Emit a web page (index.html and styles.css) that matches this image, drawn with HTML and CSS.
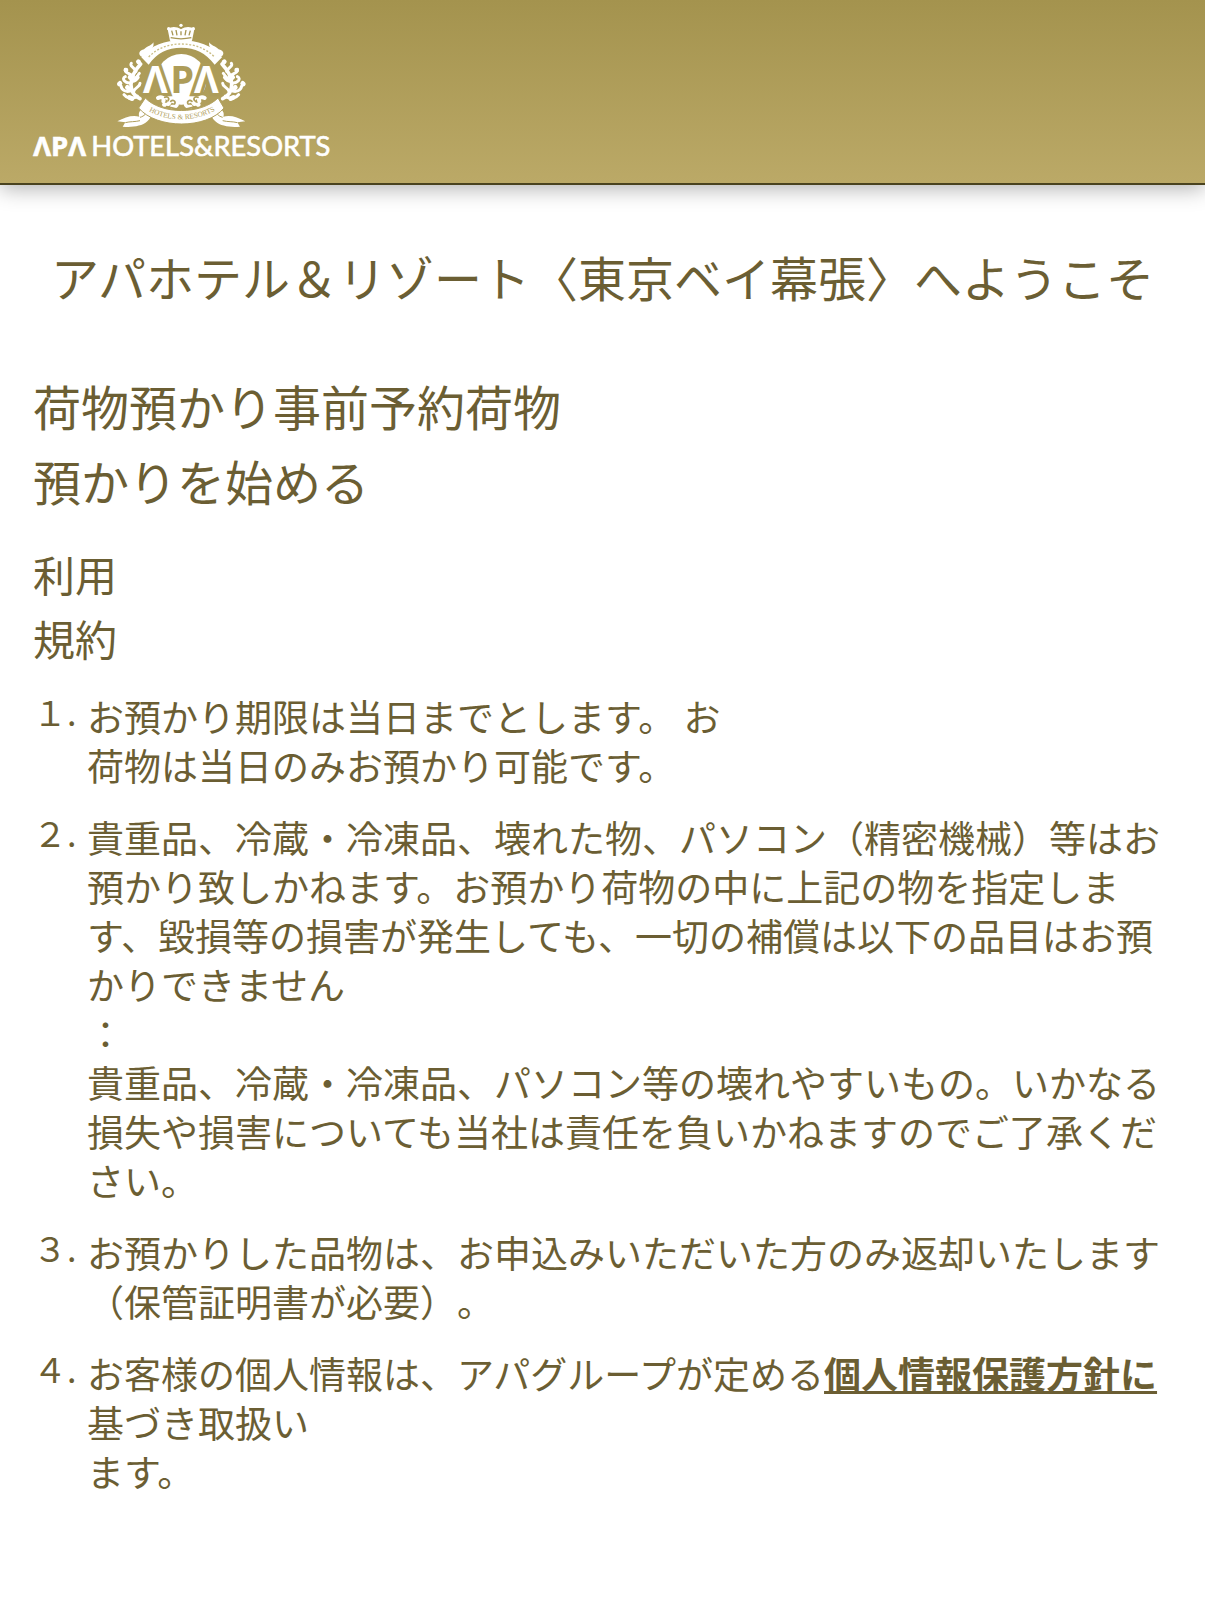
FILE: index.html
```
<!DOCTYPE html>
<html lang="ja">
<head>
    <meta charset="UTF-8">
    <meta name="viewport" content="width=device-width, initial-scale=1.0">
    <title>荷物預かり事前予約</title>
    <link rel="stylesheet" href="styles.css">
</head>
<body>
    <header class="header">
        <svg class="logo" viewBox="0 0 990 480" role="img" aria-label="APA HOTELS &amp; RESORTS">
            <defs>
                <!-- 左側の葉飾り（右側は反転して使う） -->
                <g id="leaves" fill="none" stroke="#fff" stroke-linecap="round">
                    <path d="M360 266C325 250 322 205 362 162" stroke-width="11"/>
                    <path d="M338 240C318 250 305 240 303 228M334 218C315 222 303 205 316 200M340 200C328 188 312 190 316 178M348 184C340 168 328 170 334 160M340 246C345 230 360 232 360 220M340 214C352 212 350 196 358 190M352 258C335 272 318 262 312 254" stroke-width="9"/>
                    <path d="M300 220l-2 2M318 180l0 1M355 155l1 1M328 262l8 4M346 208l6-6M322 232l3 3M330 202l3 2" stroke-width="14"/>
                </g>
                <g id="tails">
                    <path d="M372 118C352 122 354 142 374 142L386 130C392 118 404 112 400 97C394 108 384 106 372 118Z" fill="#fff"/>
                    <path d="M384 296C366 290 352 306 358 320C340 314 315 320 292 334L316 337L308 350C335 352 365 350 382 334C396 322 396 304 384 296Z" fill="#fff"/>
                    <path d="M360 322C374 318 380 310 378 302M316 338C330 334 345 336 360 332" fill="none" stroke="#b1a05d" stroke-width="3"/>
                    <path d="M414 264C424 258 434 264 430 274M432 284C444 286 452 280 448 268M456 290C466 292 472 286 470 280" fill="none" stroke="#fff" stroke-width="12" stroke-linecap="round"/>
                    <path d="M434 262C442 258 450 264 444 272M452 274C460 268 468 274 464 282M440 290L474 298" fill="none" stroke="#af9e5b" stroke-width="5" stroke-linecap="round"/>
                </g>
                <path id="ribbon-line" d="M378 298C436 338 532 338 594 296"/>
            </defs>

            <!-- 王冠 -->
            <g fill="#fff">
                <path d="M450 92L443 58C455 48 470 50 483 58C496 50 511 48 523 58L516 92C500 98 466 98 450 92Z"/>
                <circle cx="483" cy="46" r="5"/>
                <circle cx="446" cy="56" r="5"/>
                <circle cx="520" cy="56" r="5"/>
            </g>
            <path d="M455 62l4 14M468 60l3 16M483 64v12M498 60l-3 16M511 62l-4 14M452 83C470 87 496 87 514 83" fill="none" stroke="#a79653" stroke-width="4"/>

            <circle cx="484" cy="208" r="76" fill="#fff"/>
            <g class="emblem-text">
                <text class="emblem-a" x="369" y="250">Λ</text>
                <text class="emblem-a" x="522" y="250">Λ</text>
                <text class="emblem-p" x="451" y="250">P</text>
            </g>

            <use href="#leaves"/>
            <use href="#leaves" transform="translate(968 0) scale(-1 1)"/>
            <use href="#tails"/>
            <use href="#tails" transform="translate(968 0) scale(-1 1)"/>

            <!-- リボン -->
            <path d="M364 142C392 106 436 91 484 91C532 91 576 106 606 142L584 164C556 128 526 113 484 113C442 113 412 128 386 164Z" fill="#fff"/>
            <path d="M386 141C412 114 446 102 484 102C522 102 556 114 584 141" fill="none" stroke="#cabd85" stroke-width="4" stroke-dasharray="6 5"/>
            <path d="M376 264C424 314 544 314 594 264L612 294C560 358 410 358 356 294Z" fill="#fff" stroke="#b1a05d" stroke-width="3"/>
            <text class="ribbon-text"><textPath href="#ribbon-line" startOffset="50%">HOTELS &amp; RESORTS</textPath></text>

            <text class="wordmark-apa" x="40" y="439">ΛPΛ</text>
            <text class="wordmark" x="214" y="439">HOTELS&amp;RESORTS</text>
        </svg>
    </header>

    <main class="content">
        <h1 class="welcome">アパホテル＆リゾート〈東京ベイ幕張〉へようこそ</h1>
        <h2 class="page-title">荷物預かり事前予約荷物<br>預かりを始める</h2>
        <h3 class="terms-title">利用<br>規約</h3>
        <ol class="terms">
            <li>
                <span class="number">１.</span>
                <p>お預かり期限は当日までとします。 お<br>荷物は当日のみお預かり可能です。</p>
            </li>
            <li>
                <span class="number">２.</span>
                <p>貴重品、冷蔵・冷凍品、壊れた物、パソコン（精密機械）等はお預かり致しかねます。お預かり荷物の中に上記の物を指定します、毀損等の損害が発生しても、一切の補償は以下の品目はお預かりできません<br>：<br>貴重品、冷蔵・冷凍品、パソコン等の壊れやすいもの。いかなる損失や損害についても当社は責任を負いかねますのでご了承ください。</p>
            </li>
            <li>
                <span class="number">３.</span>
                <p>お預かりした品物は、お申込みいただいた方のみ返却いたします（保管証明書が必要）。</p>
            </li>
            <li>
                <span class="number">４.</span>
                <p>お客様の個人情報は、アパグループが定める<a href="#">個人情報保護方針に</a>基づき取扱い<br>ます。</p>
            </li>
        </ol>
    </main>
</body>
</html>
```
FILE: styles.css
```
* {
    box-sizing: border-box;
}

body {
    margin: 0;
    background: #fff;
    color: #6b5e33;
    font-family: "Noto Sans CJK JP", sans-serif;
    text-spacing-trim: space-all;
}

.header {
    padding: 10px 20px 13px;
    background: linear-gradient(#a4934e, #bba967);
    border-bottom: 2px solid #4a431f;
    box-shadow: 0 4px 20px rgba(0, 0, 0, 0.3);
}

.logo {
    display: block;
    width: 330px;
}

.emblem-text,
.wordmark-apa {
    font-family: "Open Sans", sans-serif;
    font-weight: 700;
}

.emblem-text {
    font-size: 114px;
}

.emblem-a {
    fill: #fff;
    stroke: #ad9c59;
    stroke-width: 20px;
    paint-order: stroke;
}

.emblem-p {
    fill: #ad9c59;
}

.ribbon-text {
    fill: #b1a05d;
    font-family: "Liberation Serif", serif;
    font-size: 22px;
    text-anchor: middle;
}

.wordmark-apa {
    fill: #fff;
    stroke: #fff;
    stroke-width: 2px;
    font-size: 82px;
}

.wordmark {
    fill: #fff;
    stroke: #fff;
    stroke-width: 2px;
    font-family: Lato, sans-serif;
    font-size: 82px;
}

.content {
    padding: 54px 33px;
}

h1,
h2,
h3,
p {
    margin: 0;
    font-weight: 400;
}

.welcome {
    margin: 0 -33px;
    text-align: center;
    font-size: 48px;
    line-height: 75px;
}

.page-title {
    margin-top: 54px;
    font-size: 48px;
    line-height: 75px;
}

.terms-title {
    margin-top: 24px;
    font-size: 42px;
    line-height: 64px;
}

.terms {
    display: grid;
    gap: 23px;
    margin: 22px 0 0;
    padding: 0;
    list-style: none;
}

.terms li {
    display: grid;
    grid-template-columns: 54px 1fr;
    font-size: 37px;
    line-height: 49px;
}

.number {
    font-size: 34px;
    line-height: 40px;
    white-space: nowrap;
}

.terms a {
    color: inherit;
    font-weight: 700;
}
```
